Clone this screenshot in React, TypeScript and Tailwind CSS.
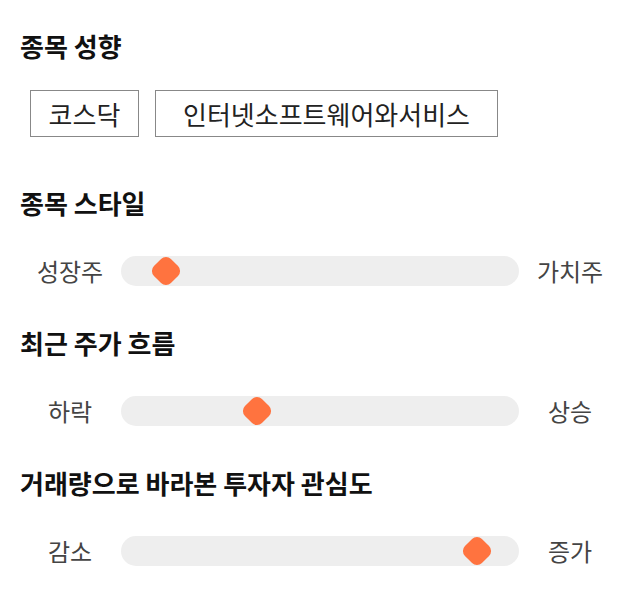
import React from "react";

const tags = [
	{ label: "코스닥", width: "w-[109px]" },
	{ label: "인터넷소프트웨어와서비스", width: "w-[343px]" },
];

const sliders = [
	{ title: "종목 스타일", left: "성장주", right: "가치주", pos: 45 },
	{ title: "최근 주가 흐름", left: "하락", right: "상승", pos: 136 },
	{ title: "거래량으로 바라본 투자자 관심도", left: "감소", right: "증가", pos: 356 },
];

function Heading({ children }: { children: React.ReactNode }) {
	return <h2 className="text-[26px] leading-[32px] font-bold text-[#111]">{children}</h2>;
}

function Range({ left, right, pos }: { left: string; right: string; pos: number }) {
	return (
		<div className="flex items-center h-[30px]">
			<span className="w-[100px] text-center text-[24px] text-[#444]">{left}</span>
			<div className="relative flex-1 h-[30px] mx-px rounded-full bg-[#eeeeee]">
				<div
					className="absolute top-1/2 w-[24px] h-[24px] -ml-[12px] -mt-[12px] rotate-45 rounded-[7px] bg-[#ff733f]"
					style={{ left: pos }}
				/>
			</div>
			<span className="w-[100px] text-center text-[24px] text-[#444]">{right}</span>
		</div>
	);
}

export default function App() {
	return (
		<div
			className="w-[640px] h-[606px] bg-white px-5 pt-[30px]"
			style={{ fontFamily: '"Noto Sans CJK KR", "Noto Sans", sans-serif' }}
		>
			<Heading>종목 성향</Heading>
			<div className="flex gap-4 ml-[10px] mt-[28px]">
				{tags.map((t) => (
					<div
						key={t.label}
						className={`${t.width} h-[47px] flex items-center justify-center border border-[#888] text-[26px] text-[#222]`}
					>
						{t.label}
					</div>
				))}
			</div>
			{sliders.map((s, i) => (
				<div key={s.title} className={i === 0 ? "mt-[50px]" : "mt-[41px]"}>
					<Heading>{s.title}</Heading>
					<div className="mt-[37px]">
						<Range left={s.left} right={s.right} pos={s.pos} />
					</div>
				</div>
			))}
		</div>
	);
}
